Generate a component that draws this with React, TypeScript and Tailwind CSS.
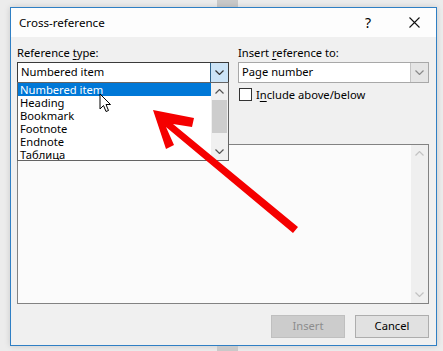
import React from "react";

function ChevDown({ color }: { color: string }) {
  return (
    <svg width="9" height="5" viewBox="0 0 9 5">
      <path d="M0.5 0.5 L4.5 4.5 L8.5 0.5" fill="none" stroke={color} strokeWidth="1.2" />
    </svg>
  );
}

function ChevUp({ color }: { color: string }) {
  return (
    <svg width="9" height="5" viewBox="0 0 9 5">
      <path d="M0.5 4.5 L4.5 0.5 L8.5 4.5" fill="none" stroke={color} strokeWidth="1.2" />
    </svg>
  );
}

const items = ["Numbered item", "Heading", "Bookmark", "Footnote", "Endnote", "Таблица"];

export default function App() {
  return (
    <div className="relative w-[443px] h-[351px] bg-[#ececec] overflow-hidden flex flex-col font-['Noto_Sans','Open_Sans',sans-serif] text-[11.2px] text-black">
      <div className="h-[7px] flex shrink-0">
        <div className="ml-[217px] w-[21px] bg-[#c9c9c9]" />
      </div>
      <div className="ml-[10px] w-[427px] h-[339px] shrink-0 border border-[#2f7fc4] bg-[#f0f0f0] flex flex-col shadow-[0_0_6px_rgba(0,0,0,0.15)]">
        <div className="h-[29px] shrink-0 bg-[#fdfdfd] flex items-center pl-[8px] pr-[16px] text-[11.6px]">
          <span>Cross-reference</span>
          <span className="ml-auto w-[14px] text-center text-[14px]">?</span>
          <svg className="ml-[34px]" width="11" height="11" viewBox="0 0 11 11">
            <path d="M0.5 0.5 L10.5 10.5 M10.5 0.5 L0.5 10.5" stroke="#111" strokeWidth="1.1" />
          </svg>
        </div>
        <div className="relative flex flex-col pl-[6px] pt-[8px]">
          <div className="flex gap-[9px]">
            <div className="w-[212px] flex flex-col">
              <div className="h-[14px] leading-[14px] mb-[3px] pt-[1px]">
                Reference <span className="underline underline-offset-2">t</span>ype:
              </div>
              <div className="relative">
                <div className="h-[21px] border border-[#3a3a3a] bg-white flex items-center">
                  <span className="pl-[3px] flex-1">Numbered item</span>
                  <div className="w-[18px] h-full bg-[#cce4f7] border-l border-[#2c628b] flex items-center justify-center">
                    <ChevDown color="#333" />
                  </div>
                </div>
                <div className="absolute left-0 top-[20px] w-[212px] h-[79px] border border-[#646464] bg-white flex z-10">
                  <div className="flex-1 flex flex-col overflow-hidden">
                    {items.map((it, i) => (
                      <div
                        key={it}
                        className={
                          i === 0
                            ? "h-[13px] leading-[13px] shrink-0 pl-[2px] bg-[#0078d7] text-white"
                            : "h-[13px] leading-[13px] shrink-0 pl-[2px]"
                        }
                      >
                        {it}
                      </div>
                    ))}
                  </div>
                  <div className="w-[17px] bg-[#f0f0f0] flex flex-col">
                    <div className="h-[17px] flex items-center justify-center">
                      <ChevUp color="#555" />
                    </div>
                    <div className="h-[33px] mx-[1px] bg-[#cdcdcd]" />
                    <div className="flex-1" />
                    <div className="h-[17px] flex items-center justify-center">
                      <ChevDown color="#555" />
                    </div>
                  </div>
                </div>
              </div>
            </div>
            <div className="w-[191px] flex flex-col">
              <div className="h-[14px] leading-[14px] mb-[3px] pt-[1px]">
                Insert <span className="underline underline-offset-2">r</span>eference to:
              </div>
              <div className="h-[21px] border border-[#a8a8a8] bg-white flex items-center">
                <span className="pl-[3px] flex-1">Page number</span>
                <div className="w-[18px] h-full bg-[#e5e5e5] border-l border-[#c4c4c4] flex items-center justify-center">
                  <ChevDown color="#8a8a8a" />
                </div>
              </div>
              <div className="mt-[5px] h-[13px] flex items-center">
                <div className="ml-[1px] w-[13px] h-[13px] border border-[#333] bg-white" />
                <span className="ml-[4px] leading-[13px]">
                  I<span className="underline underline-offset-2">n</span>clude above/below
                </span>
              </div>
            </div>
          </div>
          <div className="mt-[43px] w-[412px] h-[160px] border border-[#828282] bg-[#fbfbfb] flex justify-end">
            <div className="w-[17px] bg-[#efefef] flex flex-col justify-between py-[6px] items-center">
              <ChevUp color="#c2c2c2" />
              <ChevDown color="#c2c2c2" />
            </div>
          </div>
          <div className="mt-[11px] w-[412px] flex justify-end gap-[10px]">
            <div className="w-[74px] h-[23px] border border-[#bfbfbf] bg-[#cccccc] text-[#8c8c8c] flex items-center justify-center">
              Insert
            </div>
            <div className="w-[74px] h-[23px] border border-[#adadad] bg-[#e1e1e1] flex items-center justify-center">
              Cancel
            </div>
          </div>
        </div>
      </div>
      <div className="h-[5px] flex shrink-0">
        <div className="ml-[217px] w-[21px] bg-[#c9c9c9]" />
      </div>

      <svg className="absolute left-[99px] top-[93px] z-20 pointer-events-none" width="13" height="20" viewBox="0 0 13 20">
        <path d="M1 1 L1 16 L4.5 12.5 L7 18.5 L9.5 17.5 L7 11.5 L11.5 11.5 Z" fill="white" stroke="black" strokeWidth="1" />
      </svg>
      <svg className="absolute left-0 top-0 z-20 pointer-events-none" width="443" height="351" viewBox="0 0 443 351">
        <polygon
          points="153,110 194,118 192,127 173,124 298,227 293,233 166,127 174,145 166,149"
          fill="#f50000"
        />
      </svg>
    </div>
  );
}
